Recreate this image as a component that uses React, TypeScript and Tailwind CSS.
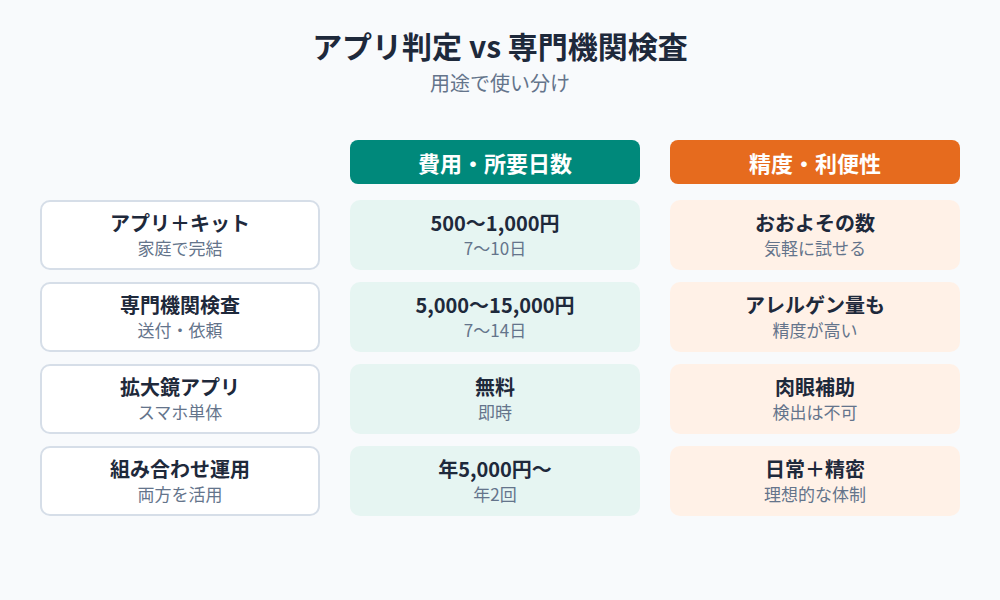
const rows = [
  {
    label: "アプリ＋キット",
    labelSub: "家庭で完結",
    cost: "500〜1,000円",
    costSub: "7〜10日",
    acc: "おおよその数",
    accSub: "気軽に試せる",
  },
  {
    label: "専門機関検査",
    labelSub: "送付・依頼",
    cost: "5,000〜15,000円",
    costSub: "7〜14日",
    acc: "アレルゲン量も",
    accSub: "精度が高い",
  },
  {
    label: "拡大鏡アプリ",
    labelSub: "スマホ単体",
    cost: "無料",
    costSub: "即時",
    acc: "肉眼補助",
    accSub: "検出は不可",
  },
  {
    label: "組み合わせ運用",
    labelSub: "両方を活用",
    cost: "年5,000円〜",
    costSub: "年2回",
    acc: "日常＋精密",
    accSub: "理想的な体制",
  },
];

function Cell({
  main,
  sub,
  className,
}: {
  main: string;
  sub: string;
  className: string;
}) {
  return (
    <div
      className={`flex h-[70px] flex-col items-center justify-center rounded-[10px] ${className}`}>
      <p className="text-[20px] leading-[26px] font-bold text-[#1e293b]">
        {main}
      </p>
      <p className="text-[17px] leading-[24px] text-[#64748b]">{sub}</p>
    </div>
  );
}

export default function App() {
  return (
    <div
      className="flex h-[600px] w-[1000px] flex-col items-center bg-[#f8fafc]"
      style={{ fontFamily: '"Noto Sans CJK JP", "Noto Sans", sans-serif' }}>
      <h1 className="mt-[25px] text-[30px] leading-[40px] font-bold text-[#1e293b]">
        アプリ判定 vs 専門機関検査
      </h1>
      <p className="mt-[4px] text-[20px] leading-[28px] text-[#64748b]">
        用途で使い分け
      </p>
      <div className="mt-[43px] grid grid-cols-[280px_290px_290px] gap-x-[30px] gap-y-[12px]">
        <div />
        <div className="flex h-[44px] items-center justify-center rounded-[8px] bg-[#00897b] text-[22px] font-bold text-white">
          費用・所要日数
        </div>
        <div className="flex h-[44px] items-center justify-center rounded-[8px] bg-[#e66b1e] text-[22px] font-bold text-white">
          精度・利便性
        </div>
        {rows.map((r, i) => (
          <div key={i} className="contents">
            <Cell
              main={r.label}
              sub={r.labelSub}
              className={`border-2 border-[#d6dee8] bg-white ${i === 0 ? "mt-[4px]" : ""}`}
            />
            <Cell
              main={r.cost}
              sub={r.costSub}
              className={`bg-[#e6f5f2] ${i === 0 ? "mt-[4px]" : ""}`}
            />
            <Cell
              main={r.acc}
              sub={r.accSub}
              className={`bg-[#fff1e7] ${i === 0 ? "mt-[4px]" : ""}`}
            />
          </div>
        ))}
      </div>
    </div>
  );
}
